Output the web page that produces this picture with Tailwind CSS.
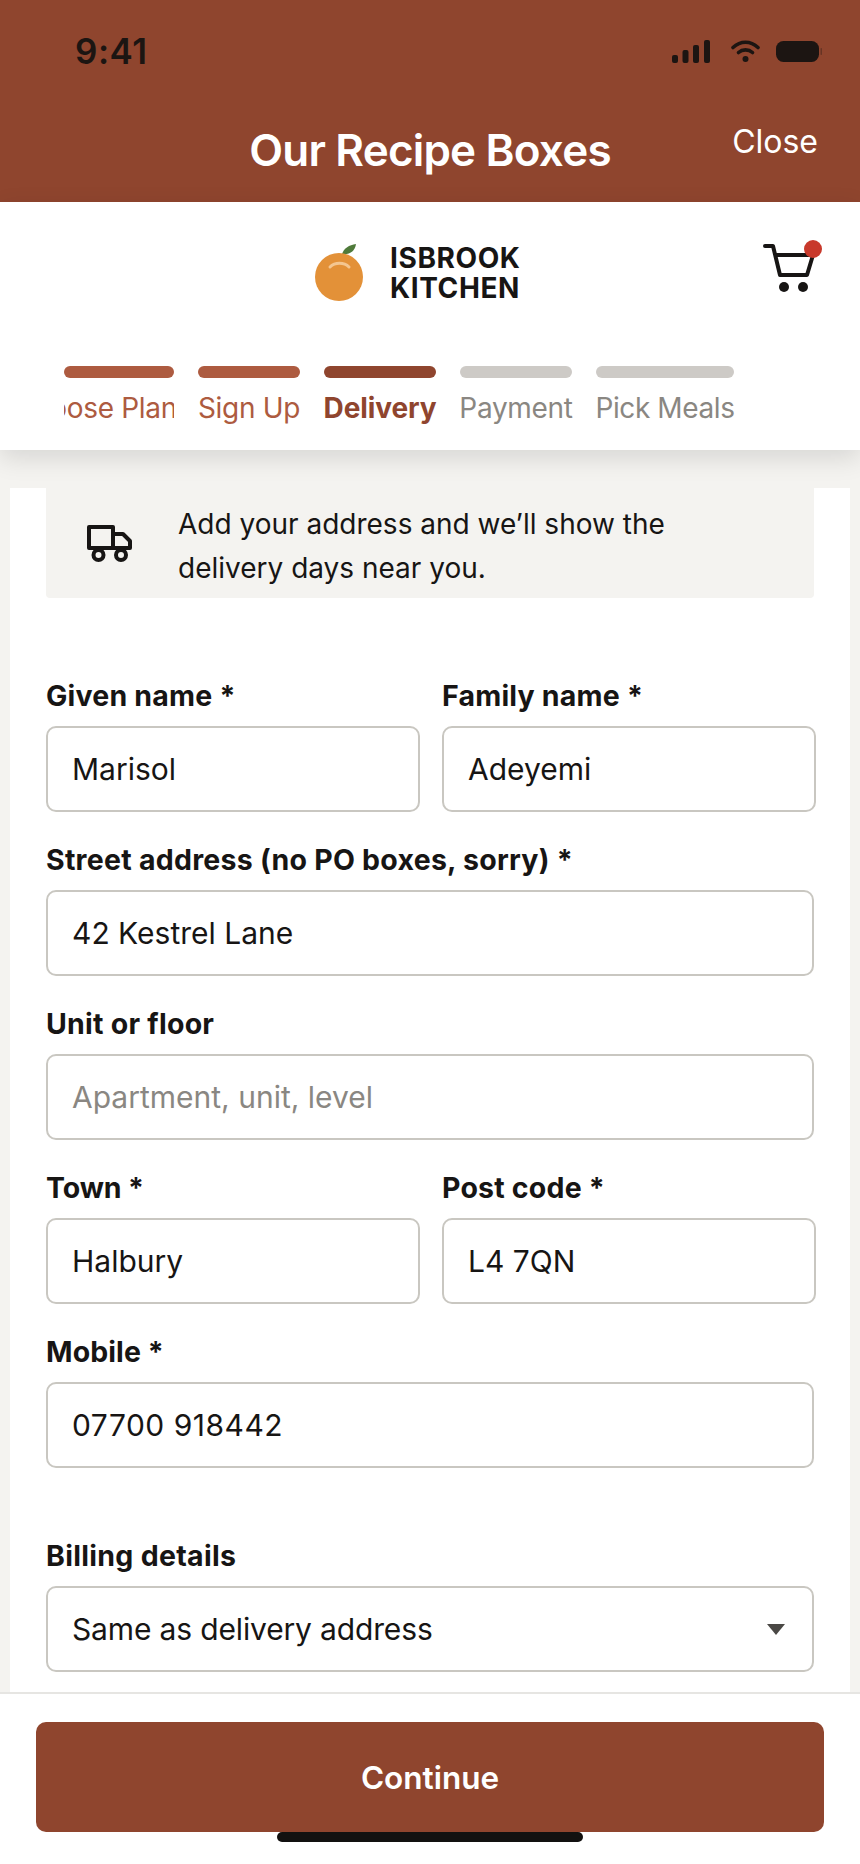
<!DOCTYPE html>
<html lang="en">
<head>
<meta charset="utf-8">
<title>Our Recipe Boxes</title>
<script src="https://cdn.jsdelivr.net/npm/@tailwindcss/browser@4"></script>
</head>
<body class="m-0">
<div class="relative w-[860px] h-[1864px] overflow-hidden flex flex-col bg-[#f4f3f0] font-['Inter',sans-serif] text-[#171514]">

  <header class="h-[202px] shrink-0 bg-[#8f452e] relative">
    <div class="flex items-center justify-between pl-[75px] pr-[38px] pt-[30px] h-[72px]">
      <span class="text-[35px] leading-[40px] font-semibold tracking-[0.5px] text-[#1c1512]">9:41</span>
      <div class="flex items-center gap-[16px]">
        <svg class="mr-[5px]" width="38" height="23" viewBox="0 0 38 23" fill="#1c1512"><rect x="0" y="15" width="6" height="8" rx="2"/><rect x="10.500" y="10" width="6" height="13" rx="2"/><rect x="21" y="5" width="6" height="18" rx="2"/><rect x="32" y="0" width="6" height="23" rx="2"/></svg>
        <svg width="29" height="22" viewBox="0 0 29 22" fill="none" stroke="#1c1512" stroke-width="3.6" stroke-linecap="round"><path d="M2 7.500C9.500 0.500 19.500 0.500 27 7.500"/><path d="M7.500 12.500C11.500 9 17.500 9 21.500 12.500"/><circle cx="14.500" cy="19" r="3" fill="#1c1512" stroke="none"/></svg>
        <svg width="46" height="21" viewBox="0 0 46 21"><rect x="0" y="0" width="43" height="21" rx="7.500" fill="#1c1512"/><rect x="44.500" y="7" width="1.500" height="7" rx="0.700" fill="#1c1512" opacity="0.35"/></svg>
      </div>
    </div>
    <h1 class="text-center text-[44px] leading-[50px] font-semibold text-white tracking-[-0.8px] mt-[53px]">Our Recipe Boxes</h1>
    <span class="absolute right-[42px] top-[122px] text-[32px] leading-[40px] text-white">Close</span>
  </header>

  <nav class="relative z-10 h-[248px] shrink-0 bg-white shadow-[0_8px_24px_rgba(0,0,0,0.12)]">
    <div class="flex items-center h-[164px] pb-[24px] pl-[315px] relative">
      <div class="flex items-center gap-[27px]">
        <svg width="48" height="57" viewBox="0 0 48 57"><path d="M27 10C29 4 34 1 41 0C40 7 35 11 27 10Z" fill="#4f7a3a"/><circle cx="24" cy="33" r="24" fill="#e39138"/><path d="M15 23C20 18 29 18 34 23" fill="none" stroke="#f4c690" stroke-width="3" stroke-linecap="round"/></svg>
        <div class="pt-[2px] text-[28px] leading-[30px] font-bold text-[#171514] tracking-[0.6px]">ISBROOK<br>KITCHEN</div>
      </div>
      <div class="absolute left-[763px] top-[41px]">
        <svg class="overflow-visible" width="60" height="52" viewBox="0 0 60 52" fill="none"><path d="M2 3H10L17 32H44L50 12H13" stroke="#171514" stroke-width="4" stroke-linecap="round" stroke-linejoin="round"/><circle cx="21" cy="44" r="5" fill="#171514"/><circle cx="40" cy="44" r="5" fill="#171514"/><circle cx="50" cy="6" r="9" fill="#c8392b"/></svg>
      </div>
    </div>
    <ol class="flex gap-[24px] pl-[64px]">
      <li class="w-[110px] flex flex-col items-center">
        <div class="w-full h-[12px] rounded-[6px] bg-[#ad5b40]"></div>
        <div class="w-full overflow-hidden flex justify-end mt-[10px] text-[28px] leading-[40px] tracking-[-0.3px] text-[#ad5b40] whitespace-nowrap"><span class="shrink-0 mr-[-3px]">Choose Plan</span></div>
      </li>
      <li class="w-[102px] flex flex-col items-center">
        <div class="w-full h-[12px] rounded-[6px] bg-[#ad5b40]"></div>
        <div class="mt-[10px] text-[28px] leading-[40px] tracking-[-0.3px] text-[#ad5b40] whitespace-nowrap">Sign Up</div>
      </li>
      <li class="w-[112px] flex flex-col items-center">
        <div class="w-full h-[12px] rounded-[6px] bg-[#8f452e]"></div>
        <div class="mt-[10px] text-[28px] leading-[40px] font-bold tracking-[-0.1px] text-[#8f452e] whitespace-nowrap">Delivery</div>
      </li>
      <li class="w-[112px] flex flex-col items-center">
        <div class="w-full h-[12px] rounded-[6px] bg-[#cdcac6]"></div>
        <div class="mt-[10px] text-[28px] leading-[40px] tracking-[-0.3px] text-[#8a8782] whitespace-nowrap">Payment</div>
      </li>
      <li class="w-[138px] flex flex-col items-center">
        <div class="w-full h-[12px] rounded-[6px] bg-[#cdcac6]"></div>
        <div class="mt-[10px] text-[28px] leading-[40px] tracking-[-0.4px] text-[#8a8782] whitespace-nowrap">Pick Meals</div>
      </li>
    </ol>
  </nav>

  <main class="flex-1 min-h-0 overflow-hidden pt-[38px] px-[10px]">
    <div class="h-full bg-white px-[36px]">
      <div class="flex items-center h-[110px] w-[768px] bg-[#f4f3f0] rounded-b-[4px] pl-[41px]">
        <svg class="shrink-0" width="46" height="37" viewBox="0 0 46 37" fill="none" stroke="#171514" stroke-width="4" stroke-linejoin="round"><path d="M2 23V2H26V23Z"/><path d="M26 9H36L43 16V23H2"/><circle cx="11.500" cy="30" r="5" fill="#f4f3f0"/><circle cx="34" cy="30" r="5" fill="#f4f3f0"/></svg>
        <p class="ml-[45px] pt-[5px] text-[28px] leading-[44px]">Add your address and we’ll show the<br>delivery days near you.</p>
      </div>

      <form class="pt-[78px]">
        <div class="grid grid-cols-[374px_374px] gap-x-[22px]">
          <div>
            <label class="block h-[50px] text-[28.500px] leading-[40px] font-bold tracking-[0.2px]">Given name *</label>
            <div class="h-[86px] flex items-center px-[24px] border-2 border-[#c9c7c1] rounded-[10px] text-[30px]">Marisol</div>
          </div>
          <div>
            <label class="block h-[50px] text-[28.500px] leading-[40px] font-bold tracking-[0.2px]">Family name *</label>
            <div class="h-[86px] flex items-center px-[24px] border-2 border-[#c9c7c1] rounded-[10px] text-[30px]">Adeyemi</div>
          </div>
        </div>
        <div class="w-[768px] mt-[28px]">
          <label class="block h-[50px] text-[28.500px] leading-[40px] font-bold tracking-[0.25px]">Street address (no PO boxes, sorry) *</label>
          <div class="h-[86px] flex items-center px-[24px] border-2 border-[#c9c7c1] rounded-[10px] text-[30px]">42 Kestrel Lane</div>
        </div>
        <div class="w-[768px] mt-[28px]">
          <label class="block h-[50px] text-[28.500px] leading-[40px] font-bold tracking-[0.25px]">Unit or floor</label>
          <div class="h-[86px] flex items-center px-[24px] border-2 border-[#c9c7c1] rounded-[10px] text-[30px] text-[#8a8782]">Apartment, unit, level</div>
        </div>
        <div class="grid grid-cols-[374px_374px] gap-x-[22px] mt-[28px]">
          <div>
            <label class="block h-[50px] text-[28.500px] leading-[40px] font-bold tracking-[-0.1px]">Town *</label>
            <div class="h-[86px] flex items-center px-[24px] border-2 border-[#c9c7c1] rounded-[10px] text-[30px]">Halbury</div>
          </div>
          <div>
            <label class="block h-[50px] text-[28.500px] leading-[40px] font-bold tracking-[0.2px]">Post code *</label>
            <div class="h-[86px] flex items-center px-[24px] border-2 border-[#c9c7c1] rounded-[10px] text-[30px]">L4 7QN</div>
          </div>
        </div>
        <div class="w-[768px] mt-[28px]">
          <label class="block h-[50px] text-[28.500px] leading-[40px] font-bold tracking-[0.1px]">Mobile *</label>
          <div class="h-[86px] flex items-center px-[24px] border-2 border-[#c9c7c1] rounded-[10px] text-[30px] tracking-[0.5px]">07700 918442</div>
        </div>
        <div class="w-[768px] mt-[68px]">
          <label class="block h-[50px] text-[28.500px] leading-[40px] font-bold tracking-[0.3px]">Billing details</label>
          <div class="h-[86px] flex items-center justify-between pl-[24px] pr-[27px] border-2 border-[#c9c7c1] rounded-[10px] text-[30px] tracking-[-0.15px]">
            <span>Same as delivery address</span>
            <svg width="18" height="11" viewBox="0 0 18 11"><path d="M0 0H18L9 11Z" fill="#4a4845"/></svg>
          </div>
        </div>
      </form>
    </div>
  </main>

  <footer class="relative z-10 h-[172px] shrink-0 bg-white border-t-2 border-[#e6e5e2] px-[36px] pt-[28px]">
    <button class="w-full h-[110px] pt-[2px] rounded-[10px] bg-[#8f452e] text-white text-[31.500px] font-semibold">Continue</button>
  </footer>
  <div class="absolute z-20 left-[277px] top-[1832px] w-[306px] h-[10px] rounded-[5px] bg-[#121110]"></div>
</div>
</body>
</html>
